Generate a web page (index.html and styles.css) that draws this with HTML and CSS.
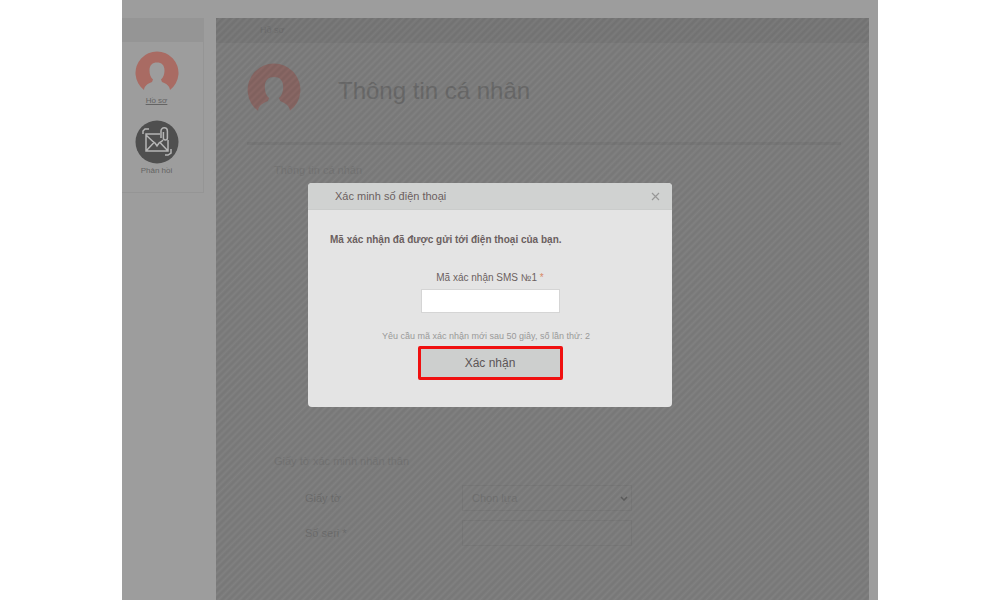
FILE: index.html
```html
<!DOCTYPE html>
<html lang="vi">
<head>
<meta charset="utf-8">
<meta name="viewport" content="width=device-width, initial-scale=1">
<title>Hồ sơ</title>
<link rel="stylesheet" href="styles.css">
</head>
<body>
<div class="page">
  <nav class="sidebar">
    <div class="sidebar-head"></div>
    <a class="nav-item active" href="#profile">
      <svg class="nav-icon" viewBox="0 0 44 44" aria-hidden="true">
        <path fill="#a96b63" d="M9 39A21.500 21.500 0 1 1 35 39C34.500 35 32 33 27 31L26 28.500C28.500 26.500 29.500 23 29.500 19.500C29.500 14 26.500 11.500 22 11.500S14.500 14 14.500 19.500C14.500 23 15.500 26.500 18 28.500L17 31C12 33 9.500 35 9 39Z"/>
      </svg>
      <span>Hồ sơ</span>
    </a>
    <a class="nav-item" href="#feedback">
      <svg class="nav-icon" viewBox="0 0 44 44" aria-hidden="true">
        <circle cx="22" cy="22" r="21.500" fill="#4f4f4f"/>
        <g fill="none" stroke="#b5b5b5" stroke-width="1.500">
          <path d="M25 14H11V31H33V20M11 15l8 7.500M33 31l-8-8.500M11 31l8-8.500M18 21.500l2 1.500 2 3 2-3 2-1.500M26 22l2-2"/>
          <path d="M26 18v-7a3.200 3.200 0 0 1 6.400 0v7a2 2 0 0 1-4 0v-6"/>
          <path d="M8 14v-3l2-2h4M36 29v4l-3 2h-3"/>
        </g>
      </svg>
      <span>Phản hồi</span>
    </a>
  </nav>
  <main class="profile">
    <div class="crumb">Hồ sơ</div>
    <div class="content">
      <header class="profile-head">
        <svg class="avatar" viewBox="0 0 44 44" aria-hidden="true">
          <path fill="#8b6966" d="M9 39A21.500 21.500 0 1 1 35 39C34.500 35 32 33 27 31L26 28.500C28.500 26.500 29.500 23 29.500 19.500C29.500 14 26.500 11.500 22 11.500S14.500 14 14.500 19.500C14.500 23 15.500 26.500 18 28.500L17 31C12 33 9.500 35 9 39Z"/>
        </svg>
        <h1>Thông tin cá nhân</h1>
      </header>
      <section class="group personal">
        <h2>Thông tin cá nhân</h2>
      </section>
      <section class="group">
        <h2>Giấy tờ xác minh nhân thân</h2>
        <div class="field">
          <label for="doc">Giấy tờ</label>
          <span class="select"><select id="doc"><option>Chọn lựa</option></select>
            <svg viewBox="0 0 8 5" aria-hidden="true"><path d="M1 1l3 3 3-3" fill="none" stroke="#606060" stroke-width="1.500"/></svg>
          </span>
        </div>
        <div class="field">
          <label for="serial">Số seri *</label>
          <input id="serial" type="text">
        </div>
      </section>
    </div>
    <div class="shade"></div>
  </main>
  <div class="modal" role="dialog" aria-labelledby="modal-title">
    <div class="modal-head">
      <h2 id="modal-title">Xác minh số điện thoại</h2>
      <button class="close" type="button" aria-label="Đóng">
        <svg viewBox="0 0 9 9" aria-hidden="true"><path d="M1 1l7 7M8 1L1 8" stroke="#979797" stroke-width="1.200"/></svg>
      </button>
    </div>
    <form class="modal-body">
      <p class="notice">Mã xác nhận đã được gửi tới điện thoại của bạn.</p>
      <label class="code-label" for="code">Mã xác nhận SMS №1 <span class="required">*</span></label>
      <input class="code" id="code" type="text">
      <p class="hint">Yêu cầu mã xác nhận mới sau 50 giây, số lần thử: 2</p>
      <button class="confirm" type="button">Xác nhận</button>
    </form>
  </div>
</div>
</body>
</html>
```
FILE: styles.css
```css
* { box-sizing: border-box; }
body {
  margin: 0;
  background: #fff;
  font-family: "Liberation Sans", Arial, sans-serif;
}
h1, h2, p { margin: 0; font-weight: normal; }
button, input, select { font-family: inherit; margin: 0; }
.page {
  position: relative;
  display: flex;
  gap: 12px;
  align-items: flex-start;
  min-height: 100vh;
  margin: 0 12.2%;
  padding: 18px 9px 0 0;
  background: #9d9d9d;
}
.sidebar {
  flex: 0 0 82px;
  display: flex;
  flex-direction: column;
  align-items: center;
  padding-bottom: 15px;
  border: solid #959595;
  border-width: 0 1px 1px 0;
}
.sidebar-head {
  align-self: stretch;
  height: 24px;
  margin-bottom: 9px;
  background: #959595;
}
.nav-item {
  display: flex;
  flex-direction: column;
  align-items: center;
  margin-right: 12px;
  margin-bottom: 13px;
  font-size: 8px;
  line-height: 12px;
  color: #646464;
  text-decoration: none;
}
.nav-item:last-child { margin-bottom: 0; }
.nav-item:last-child span { padding-top: 1px; }
.active { text-decoration: underline; }
.nav-icon { width: 44px; height: 44px; }
.profile {
  position: relative;
  flex: 1;
  min-height: calc(100vh - 18px);
  background: #828282;
  color: #707070;
}
.crumb {
  padding-left: 44px;
  background: #7c7c7c;
  font-size: 9px;
  line-height: 25px;
}
.content { padding: 20px 28px 0 31px; }
.profile-head {
  display: flex;
  gap: 37px;
  height: 82px;
  border-bottom: 3px solid #7b7b7b;
}
.avatar { width: 54px; height: 54px; }
h1 {
  font-size: 24px;
  line-height: 56px;
  color: #6c6c6c;
}
.group { padding: 0 27px; }
.group h2 {
  font-size: 11px;
  line-height: 16px;
  color: #777;
}
.personal { padding-top: 17px; min-height: 308px; }
.group h2 + .field { margin-top: 16px; }
.field {
  display: flex;
  align-items: center;
  margin-bottom: 9px;
  padding-left: 31px;
  font-size: 11px;
}
.field label { flex: 0 0 157px; }
.select { position: relative; }
.select svg {
  position: absolute;
  right: 4px;
  top: 11px;
  width: 8px;
  height: 5px;
}
.field select, .field input {
  display: block;
  width: 170px;
  height: 26px;
  padding: 0 9px;
  border: 1px solid #7c7c7c;
  border-radius: 0;
  background: transparent;
  color: #757575;
  font-size: 11px;
  appearance: none;
}
.shade {
  position: absolute;
  inset: 0;
  pointer-events: none;
  background: repeating-linear-gradient(135deg, rgba(0, 0, 0, .08) 0 1px, rgba(0, 0, 0, .01) 3px, rgba(0, 0, 0, .08) 5px);
}
.modal {
  position: absolute;
  top: 183px;
  left: calc(50% - 192px);
  width: 364px;
  overflow: hidden;
  border-radius: 4px;
  background: #e4e4e4;
  color: #6b5f60;
}
.modal-head {
  display: flex;
  justify-content: space-between;
  align-items: center;
  height: 27px;
  padding: 0 12px 0 27px;
  border-bottom: 1px solid #cacccb;
  background: #d0d2d1;
}
.modal-head h2 { font-size: 11px; }
.close {
  display: flex;
  padding: 0;
  border: 0;
  background: none;
}
.close svg { width: 9px; height: 9px; }
.modal-body {
  display: flex;
  flex-direction: column;
  align-items: center;
  padding: 23px 22px 27px;
}
.notice {
  align-self: stretch;
  margin-bottom: 24px;
  font-size: 10px;
  line-height: 14px;
  font-weight: bold;
}
.code-label {
  margin-bottom: 4px;
  font-size: 10px;
  line-height: 14px;
}
.required { color: #d88a68; }
.code {
  width: 139px;
  height: 24px;
  padding: 0 8px;
  border: 1px solid #d5d5d5;
  background: #fff;
}
.hint {
  margin: 16px 8px 3px 0;
  font-size: 9px;
  line-height: 14px;
  color: #999;
}
.confirm {
  width: 145px;
  height: 34px;
  padding: 0;
  border: 3px solid #f01010;
  border-radius: 2px;
  background: #cdcfce;
  color: #5c5556;
  font-size: 12px;
}
```
